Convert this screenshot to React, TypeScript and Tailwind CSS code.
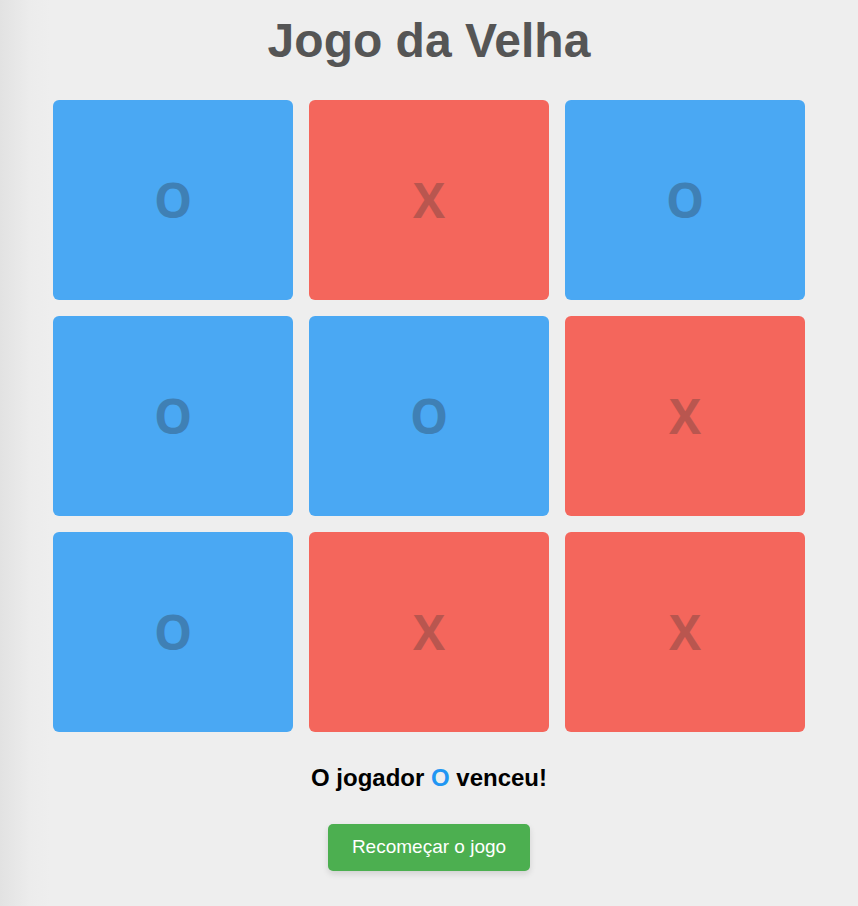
import { useState } from 'react';

type Mark = 'X' | 'O';

const initialBoard: Mark[] = ['O', 'X', 'O', 'O', 'O', 'X', 'O', 'X', 'X'];

const Cell = ({ mark }: { mark: Mark }) => (
  <div
    className={`flex h-[200px] items-center justify-center rounded-md text-[48px] font-bold ${
      mark === 'O' ? 'bg-[#4aa8f3] text-[#3f80b5]' : 'bg-[#f4665c] text-[#b9564f]'
    }`}
    style={{ fontFamily: '"Open Sans", "Noto Sans", sans-serif' }}
  >
    {mark}
  </div>
);

export default function App() {
  const [board] = useState<Mark[]>(initialBoard);

  return (
    <div
      className="min-h-[906px] bg-[linear-gradient(to_right,#e2e2e2,#ececec_30px,#eeeeee_50px)] pt-[13px] text-center"
      style={{ fontFamily: '"Liberation Sans", Arial, sans-serif' }}
    >
      <h1 className="text-[48px] font-bold leading-[55px] text-[#555555]">Jogo da Velha</h1>

      {/* tabuleiro */}
      <div className="mx-auto mt-[32px] grid w-[752px] grid-cols-3 gap-4">
        {board.map((mark, i) => (
          <Cell key={i} mark={mark} />
        ))}
      </div>

      <p className="mt-[32px] text-[24px] font-bold leading-[28px] text-black">
        O jogador <span className="text-[#2196f3]">O</span> venceu!
      </p>

      <button className="mt-[32px] h-[47px] rounded-[5px] bg-[#4caf50] px-6 text-[19px] text-white shadow-[0_3px_6px_rgba(0,0,0,0.12)]">
        Recomeçar o jogo
      </button>
    </div>
  );
}
